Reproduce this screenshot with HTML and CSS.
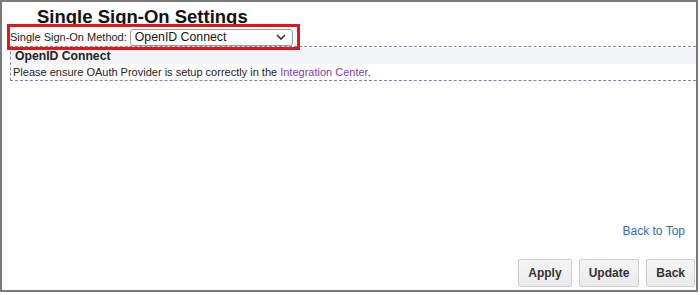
FILE: index.html
```html
<!DOCTYPE html>
<html>
<head>
<meta charset="utf-8">
<link rel="stylesheet" href="styles.css">
</head>
<body>
<div class="frame">
  <h1 class="title">Single Sign-On Settings</h1>
  <div class="method-row">
    <label class="method-label">Single Sign-On Method:</label>
    <div class="select">
      <span class="select-text">OpenID Connect</span>
      <svg class="chevron" width="10" height="6" viewBox="0 0 10 6"><path d="M1 1 L5 5 L9 1" fill="none" stroke="#333" stroke-width="1.6"/></svg>
    </div>
    <div class="highlight"></div>
  </div>
  <div class="section">
    <div class="section-head">OpenID Connect</div>
    <div class="section-body">Please ensure OAuth Provider is setup correctly in the <a class="purple-link" href="#">Integration Center</a>.</div>
  </div>
  <div class="spacer"></div>
  <div class="back-top"><a href="#">Back to Top</a></div>
  <div class="actions">
    <button class="btn">Apply</button>
    <button class="btn">Update</button>
    <button class="btn">Back</button>
  </div>
</div>
</body>
</html>
```
FILE: styles.css
```css
html, body {
  margin: 0;
  padding: 0;
  background: #fff;
}
body {
  font-family: "Liberation Sans", Arial, sans-serif;
  color: #222;
}
.frame {
  box-sizing: border-box;
  width: 698px;
  height: 292px;
  border: 2px solid #7a7a7a;
  display: flex;
  flex-direction: column;
}
.title {
  margin: 5px 0 0 35px;
  font-size: 18.5px;
  line-height: 20px;
  font-weight: bold;
  color: #111;
}
.method-row {
  position: relative;
  display: flex;
  align-items: center;
  height: 18px;
  margin: 1px 0 0 8px;
}
.method-label {
  font-size: 11px;
  color: #222;
  margin-right: 3px;
}
.select {
  box-sizing: border-box;
  width: 163px;
  height: 17px;
  border: 1px solid #999;
  border-radius: 3px;
  display: flex;
  align-items: center;
  justify-content: space-between;
  padding: 0 6px 0 4px;
  font-size: 12.3px;
  color: #111;
}
.chevron {
  display: block;
}
.highlight {
  position: absolute;
  left: -3px;
  top: -4px;
  width: 287px;
  height: 20px;
  border: 3px solid #e3141c;
  pointer-events: none;
}
.section {
  margin: 0 0 0 8px;
  border: 1px dashed #7e8798;
  border-right: none;
  padding: 1px 0 0 1px;
}
.section-head {
  background: #f2f3f7;
  font-size: 12.2px;
  font-weight: bold;
  line-height: 16px;
  padding-left: 3px;
  color: #222;
}
.section-body {
  font-size: 11px;
  line-height: 16px;
  padding-left: 1px;
  color: #222;
}
.purple-link {
  color: #7d3fa6;
  text-decoration: none;
}
.spacer {
  flex: 1;
}
.back-top {
  text-align: right;
  padding-right: 11px;
  font-size: 12px;
  line-height: 14px;
}
.back-top a {
  color: #2f6db6;
  text-decoration: none;
}
.actions {
  display: flex;
  justify-content: flex-end;
  gap: 7px;
  margin: 21px 1px 3px 0;
}
.btn {
  font-family: "Liberation Sans", Arial, sans-serif;
  font-size: 12px;
  font-weight: bold;
  color: #333;
  height: 28px;
  padding: 0 9px;
  background: linear-gradient(#f4f4f4, #ebebeb);
  border: 1px solid #cdcdcd;
  border-radius: 2px;
}
```
